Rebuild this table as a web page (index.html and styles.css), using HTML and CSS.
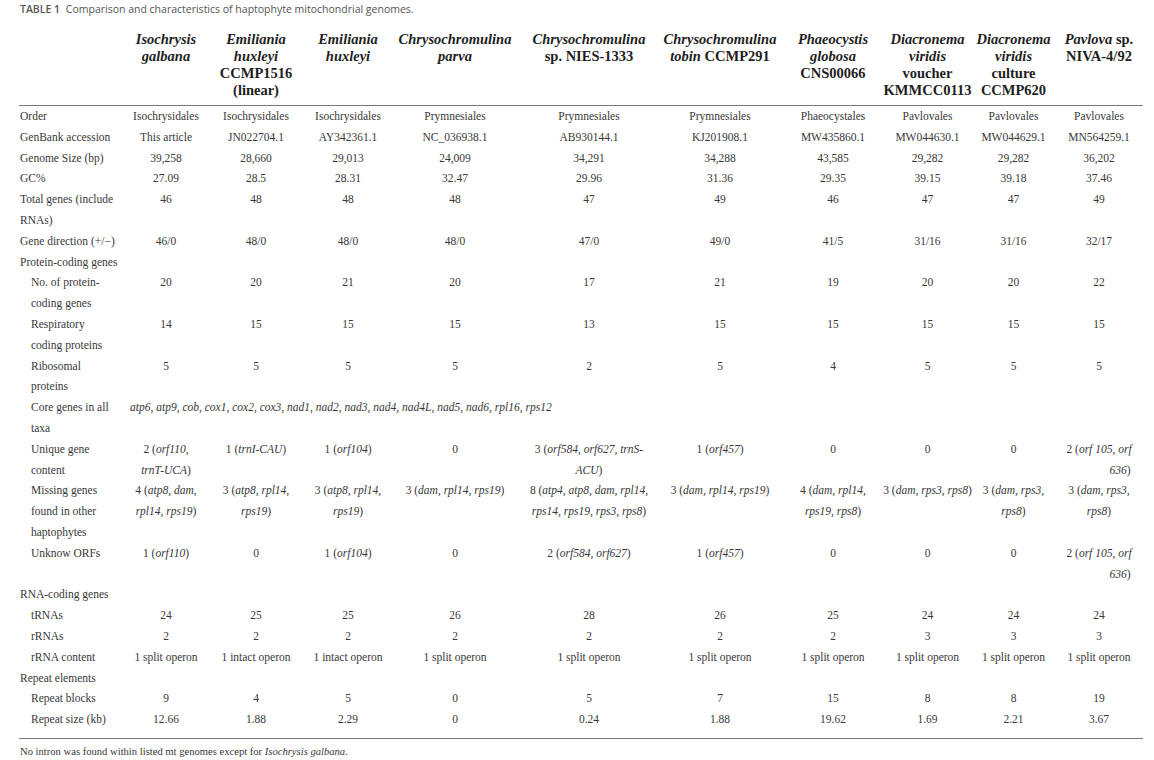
FILE: index.html
```html
<!DOCTYPE html>
<html lang="en">
<head>
<meta charset="utf-8">
<title>Table 1</title>
<link rel="stylesheet" href="styles.css">
</head>
<body>
<div class="page">
  <p class="ttl"><b>TABLE 1</b> Comparison and characteristics of haptophyte mitochondrial genomes.</p>
  <table class="t">
    <colgroup>
      <col class="w0"><col class="w1"><col class="w2"><col class="w3"><col class="w4"><col class="w5"><col class="w6"><col class="w7"><col class="w8"><col class="w9"><col class="w10">
    </colgroup>
    <thead>
      <tr>
        <th></th>
        <th><i>Isochrysis</i><br><i>galbana</i></th>
        <th><i>Emiliania</i><br><i>huxleyi</i><br>CCMP1516<br>(linear)</th>
        <th><i>Emiliania</i><br><i>huxleyi</i></th>
        <th><i>Chrysochromulina</i><br><i>parva</i></th>
        <th><i>Chrysochromulina</i><br>sp. NIES-1333</th>
        <th><i>Chrysochromulina</i><br><i>tobin</i> CCMP291</th>
        <th><i>Phaeocystis</i><br><i>globosa</i><br>CNS00066</th>
        <th><i>Diacronema</i><br><i>viridis</i><br>voucher<br>KMMCC0113</th>
        <th><i>Diacronema</i><br><i>viridis</i><br>culture<br>CCMP620</th>
        <th><i>Pavlova</i> sp.<br>NIVA-4/92</th>
      </tr>
    </thead>
    <tbody>
      <tr><td class="l">Order</td><td>Isochrysidales</td><td>Isochrysidales</td><td>Isochrysidales</td><td>Prymnesiales</td><td>Prymnesiales</td><td>Prymnesiales</td><td>Phaeocystales</td><td>Pavlovales</td><td>Pavlovales</td><td>Pavlovales</td></tr>
      <tr><td class="l">GenBank accession</td><td>This article</td><td>JN022704.1</td><td>AY342361.1</td><td>NC_036938.1</td><td>AB930144.1</td><td>KJ201908.1</td><td>MW435860.1</td><td>MW044630.1</td><td>MW044629.1</td><td>MN564259.1</td></tr>
      <tr><td class="l">Genome Size (bp)</td><td>39,258</td><td>28,660</td><td>29,013</td><td>24,009</td><td>34,291</td><td>34,288</td><td>43,585</td><td>29,282</td><td>29,282</td><td>36,202</td></tr>
      <tr><td class="l">GC%</td><td>27.09</td><td>28.5</td><td>28.31</td><td>32.47</td><td>29.96</td><td>31.36</td><td>29.35</td><td>39.15</td><td>39.18</td><td>37.46</td></tr>
      <tr><td class="l">Total genes (include<br>RNAs)</td><td>46</td><td>48</td><td>48</td><td>48</td><td>47</td><td>49</td><td>46</td><td>47</td><td>47</td><td>49</td></tr>
      <tr><td class="l">Gene direction (+/−)</td><td>46/0</td><td>48/0</td><td>48/0</td><td>48/0</td><td>47/0</td><td>49/0</td><td>41/5</td><td>31/16</td><td>31/16</td><td>32/17</td></tr>
      <tr><td class="l">Protein-coding genes</td><td></td><td></td><td></td><td></td><td></td><td></td><td></td><td></td><td></td><td></td></tr>
      <tr><td class="l s">No. of protein-<br>coding genes</td><td>20</td><td>20</td><td>21</td><td>20</td><td>17</td><td>21</td><td>19</td><td>20</td><td>20</td><td>22</td></tr>
      <tr><td class="l s">Respiratory<br>coding proteins</td><td>14</td><td>15</td><td>15</td><td>15</td><td>13</td><td>15</td><td>15</td><td>15</td><td>15</td><td>15</td></tr>
      <tr><td class="l s">Ribosomal<br>proteins</td><td>5</td><td>5</td><td>5</td><td>5</td><td>2</td><td>5</td><td>4</td><td>5</td><td>5</td><td>5</td></tr>
      <tr><td class="l s">Core genes in all<br>taxa</td><td class="core" colspan="10"><i>atp6, atp9, cob, cox1, cox2, cox3, nad1, nad2, nad3, nad4, nad4L, nad5, nad6, rpl16, rps12</i></td></tr>
      <tr><td class="l s">Unique gene<br>content</td><td>2 (<i>orf110,</i><br><i>trnT-UCA</i>)</td><td>1 (<i>trnI-CAU</i>)</td><td>1 (<i>orf104</i>)</td><td>0</td><td>3 (<i>orf584, orf627, trnS-</i><br><i>ACU</i>)</td><td>1 (<i>orf457</i>)</td><td>0</td><td>0</td><td>0</td><td>2 (<i>orf 105, orf</i><br><span class="shift"><i>636</i>)</span></td></tr>
      <tr><td class="l s">Missing genes<br>found in other<br>haptophytes</td><td>4 (<i>atp8, dam,</i><br><i>rpl14, rps19</i>)</td><td>3 (<i>atp8, rpl14,</i><br><i>rps19</i>)</td><td>3 (<i>atp8, rpl14,</i><br><i>rps19</i>)</td><td>3 (<i>dam, rpl14, rps19</i>)</td><td>8 (<i>atp4, atp8, dam, rpl14,</i><br><i>rps14, rps19, rps3, rps8</i>)</td><td>3 (<i>dam, rpl14, rps19</i>)</td><td>4 (<i>dam, rpl14,</i><br><i>rps19, rps8</i>)</td><td>3 (<i>dam, rps3, rps8</i>)</td><td>3 (<i>dam, rps3,</i><br><i>rps8</i>)</td><td>3 (<i>dam, rps3,</i><br><i>rps8</i>)</td></tr>
      <tr><td class="l s">Unknow ORFs</td><td>1 (<i>orf110</i>)</td><td>0</td><td>1 (<i>orf104</i>)</td><td>0</td><td>2 (<i>orf584, orf627</i>)</td><td>1 (<i>orf457</i>)</td><td>0</td><td>0</td><td>0</td><td>2 (<i>orf 105, orf</i><br><span class="shift"><i>636</i>)</span></td></tr>
      <tr><td class="l">RNA-coding genes</td><td></td><td></td><td></td><td></td><td></td><td></td><td></td><td></td><td></td><td></td></tr>
      <tr><td class="l s">tRNAs</td><td>24</td><td>25</td><td>25</td><td>26</td><td>28</td><td>26</td><td>25</td><td>24</td><td>24</td><td>24</td></tr>
      <tr><td class="l s">rRNAs</td><td>2</td><td>2</td><td>2</td><td>2</td><td>2</td><td>2</td><td>2</td><td>3</td><td>3</td><td>3</td></tr>
      <tr><td class="l s">rRNA content</td><td>1 split operon</td><td>1 intact operon</td><td>1 intact operon</td><td>1 split operon</td><td>1 split operon</td><td>1 split operon</td><td>1 split operon</td><td>1 split operon</td><td>1 split operon</td><td>1 split operon</td></tr>
      <tr><td class="l">Repeat elements</td><td></td><td></td><td></td><td></td><td></td><td></td><td></td><td></td><td></td><td></td></tr>
      <tr><td class="l s">Repeat blocks</td><td>9</td><td>4</td><td>5</td><td>0</td><td>5</td><td>7</td><td>15</td><td>8</td><td>8</td><td>19</td></tr>
      <tr class="last"><td class="l s">Repeat size (kb)</td><td>12.66</td><td>1.88</td><td>2.29</td><td>0</td><td>0.24</td><td>1.88</td><td>19.62</td><td>1.69</td><td>2.21</td><td>3.67</td></tr>
    </tbody>
  </table>
  <p class="foot">No intron was found within listed mt genomes except for <i>Isochrysis galbana</i>.</p>
</div>
</body>
</html>
```

FILE: styles.css
```css
html, body {
  margin: 0;
  padding: 0;
  background: #ffffff;
}

.page {
  padding: 2px 11px 0 19px;
}

.ttl {
  margin: 0 0 15px 1px;
  font-family: "Open Sans", "Noto Sans", sans-serif;
  font-size: 10.5px;
  line-height: 14px;
  color: #555555;
}

.ttl b {
  font-weight: 600;
  margin-right: 3px;
}

.t {
  border-collapse: collapse;
  table-layout: fixed;
  width: 1124px;
  font-family: "Liberation Serif", "Times New Roman", serif;
  color: #383838;
}

.w0 { width: 108px; }
.w1 { width: 78px; }
.w2 { width: 102px; }
.w3 { width: 82px; }
.w4 { width: 132px; }
.w5 { width: 136px; }
.w6 { width: 126px; }
.w7 { width: 100px; }
.w8 { width: 89px; }
.w9 { width: 83px; }
.w10 { width: 88px; }

.t th {
  font-size: 14.5px;
  line-height: 17px;
  font-weight: bold;
  color: #1e1e1e;
  text-align: center;
  vertical-align: top;
  white-space: nowrap;
  padding: 0 0 6px 0;
  border-bottom: 1px solid #7a7a7a;
}

.t td {
  font-size: 11.5px;
  line-height: 20.8px;
  text-align: center;
  vertical-align: top;
  white-space: nowrap;
  padding: 0;
}

.t td.l {
  text-align: left;
  padding-left: 1px;
}

.t td.s {
  padding-left: 12px;
}

.t td.core {
  text-align: left;
  padding-left: 3px;
}

.shift {
  display: inline-block;
  margin-left: 42px;
}

.t tr.last td {
  padding-bottom: 8px;
  border-bottom: 1px solid #7a7a7a;
}

.foot {
  margin: 6px 0 0 1px;
  font-family: "Liberation Serif", "Times New Roman", serif;
  font-size: 10.6px;
  line-height: 14px;
  color: #383838;
}
```
